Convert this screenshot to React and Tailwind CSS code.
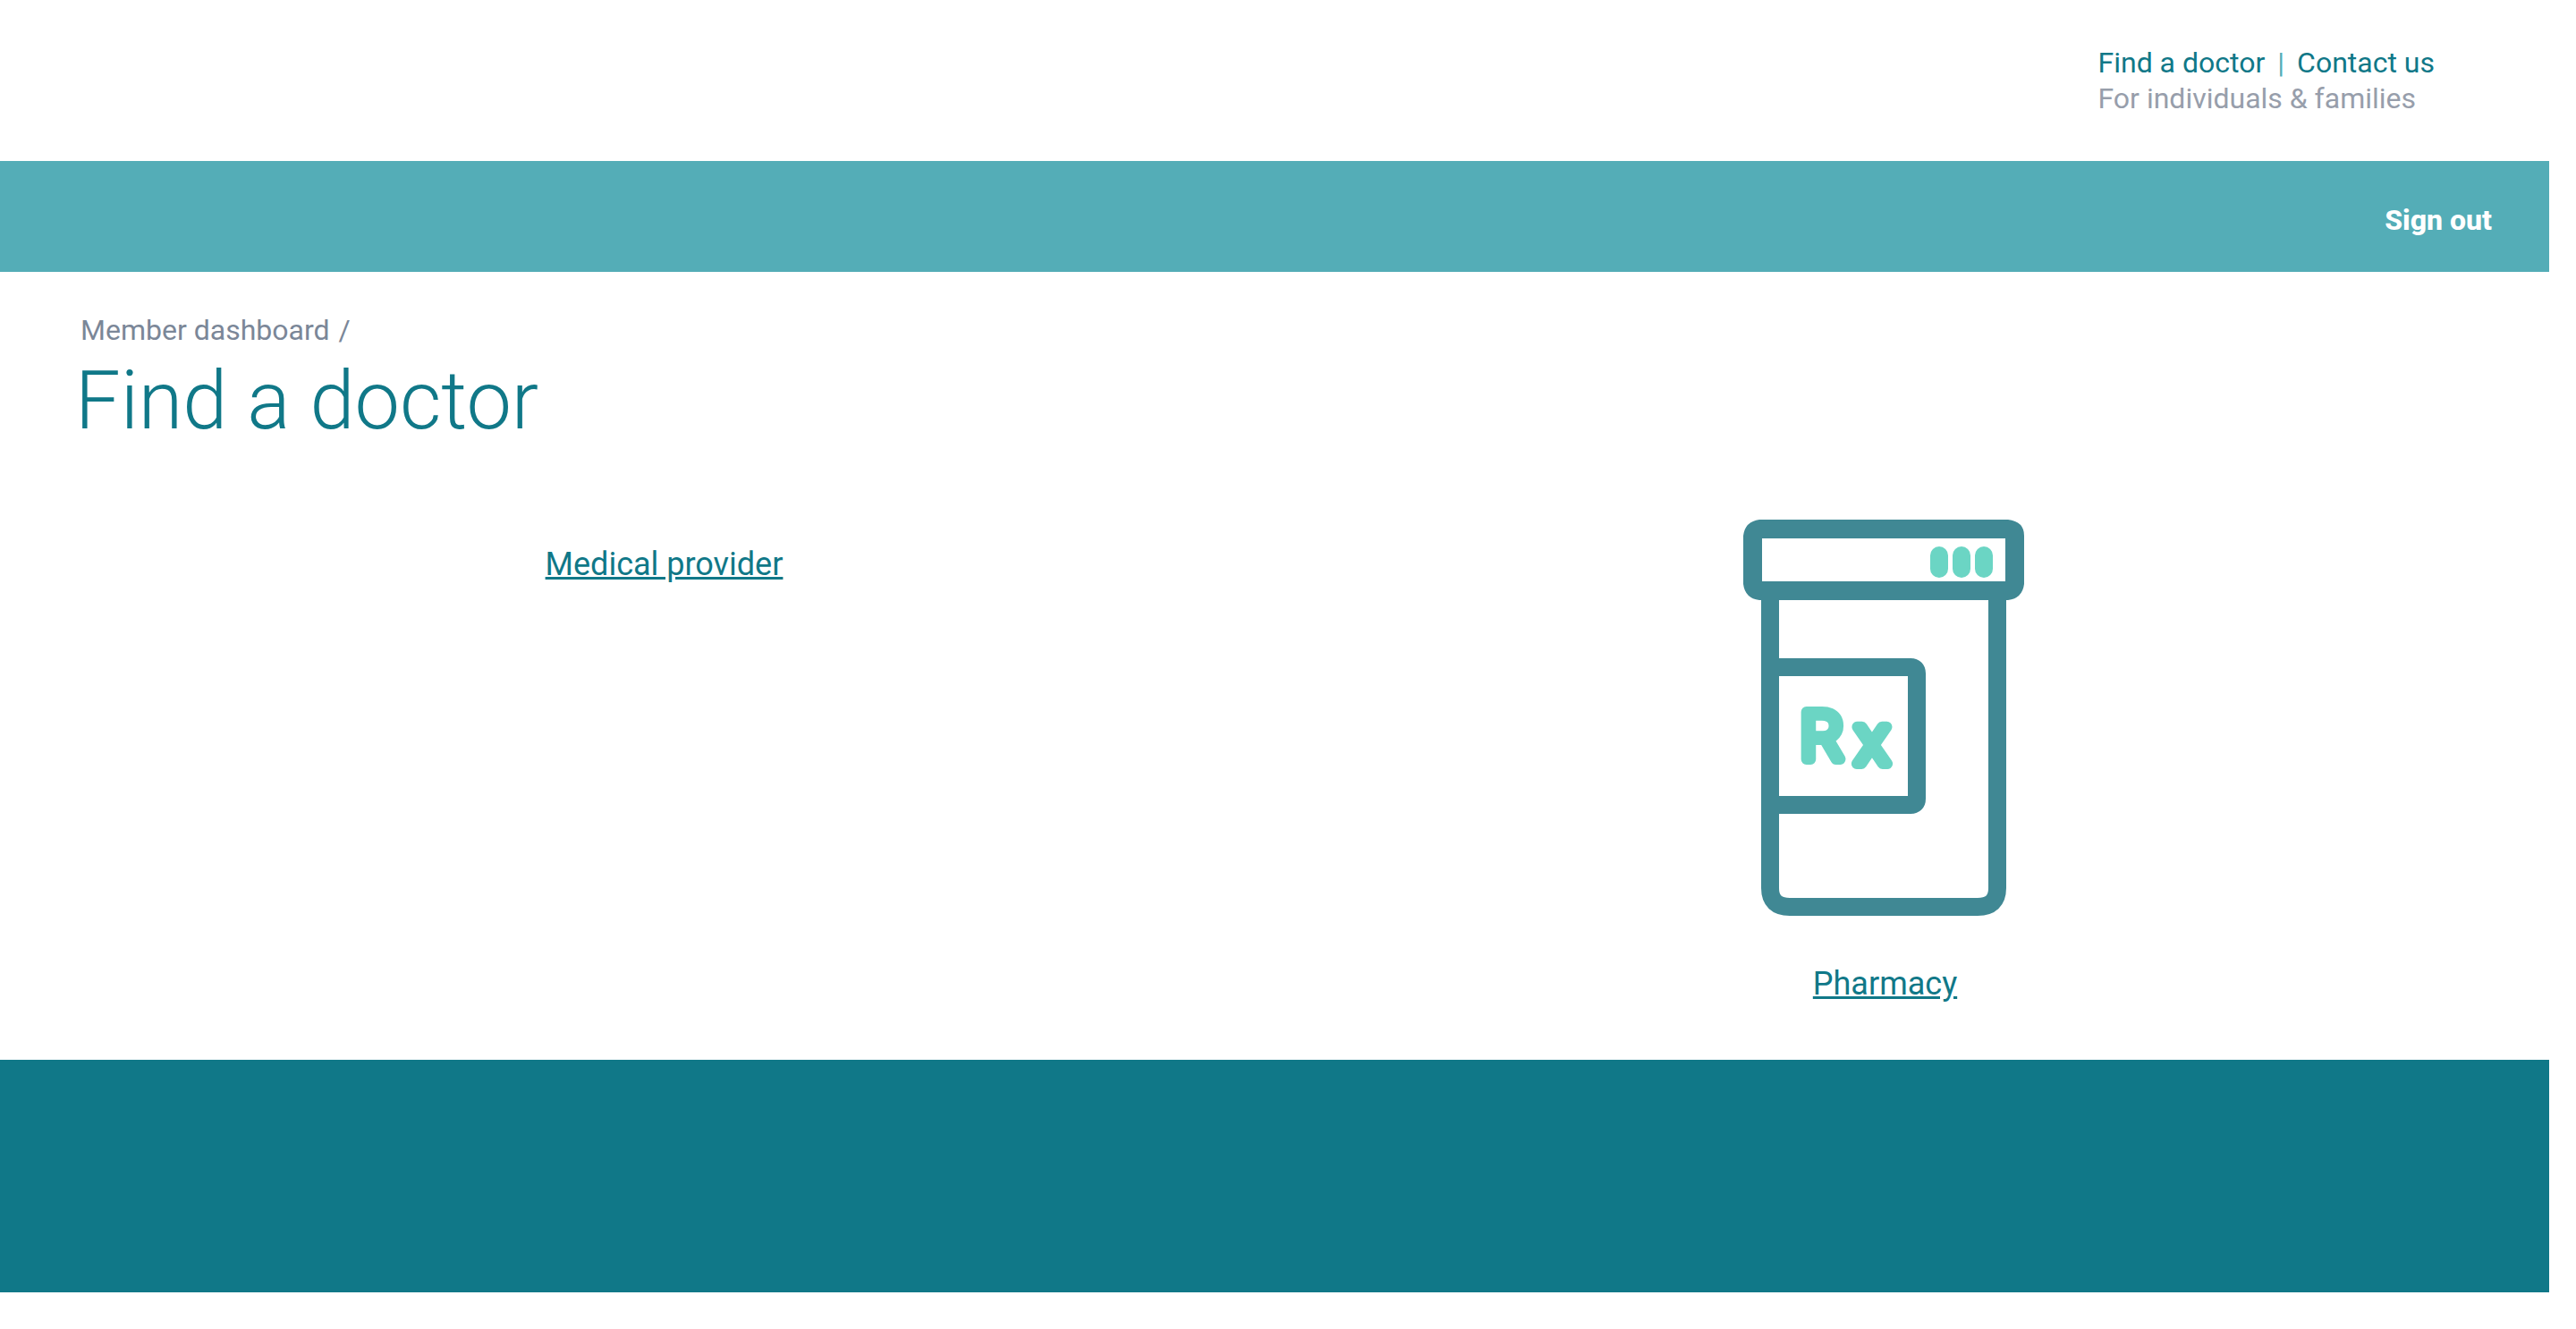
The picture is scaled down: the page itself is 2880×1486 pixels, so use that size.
function PillBottle() {
  return (
    <svg viewBox="0 0 314 443" className="w-[314px] h-[443px]" role="img" aria-label="Pharmacy bottle">
      <g fill="none" stroke="#408894" strokeWidth="20">
        <path d="M30 85V412Q30 433 52 433H262Q284 433 284 412V85" />
        <path d="M30 165H187Q194 165 194 172V312Q194 319 187 319H30" />
      </g>
      <path
        fill="#408894"
        fillRule="evenodd"
        d="M18 0H296Q314 2 314 18V72Q312 88 296 90H18Q2 88 0 72V18Q2 2 18 0ZM21 21V69H293V21Z"
      />
      <g fill="#6bd5c4">
        <rect x="209" y="30" width="20" height="35" rx="10" />
        <rect x="234" y="30" width="20" height="35" rx="10" />
        <rect x="259" y="30" width="20" height="35" rx="10" />
      </g>
      <g
        fill="#6bd5c4"
        stroke="#6bd5c4"
        strokeWidth="12"
        strokeLinejoin="round"
        fontFamily="Roboto, sans-serif"
        fontWeight="300"
      >
        <text x="64" y="268" fontSize="75">R</text>
        <text x="125" y="273" fontSize="78">x</text>
      </g>
    </svg>
  );
}

const tileLink = "text-4xl leading-[44px] text-[#107888] underline";

export default function App() {
  return (
    <div className="bg-white pr-[30px] font-['Roboto',sans-serif] text-[32px] leading-10">
      <header>
        <div className="flex h-[180px] justify-end pt-[50px] pr-32">
          <div>
            <nav className="flex gap-[14px] text-[#107888]">
              <a href="#find">Find a doctor</a>
              <span className="text-[#54adb7]">|</span>
              <a href="#contact">Contact us</a>
            </nav>
            <p className="text-[#979eab]">For individuals &amp; families</p>
          </div>
        </div>
        <div className="flex h-[124px] items-center justify-end bg-[#54adb7] pt-2 pr-16">
          <button type="button" className="font-extrabold text-white">Sign out</button>
        </div>
      </header>

      <main className="h-[881px] px-[60px] pt-[45px]">
        <nav aria-label="Breadcrumb" className="flex gap-[10px] pl-[30px] text-[#7b8798]">
          <a href="#dashboard">Member dashboard</a>
          <span>/</span>
        </nav>
        <h1 className="pl-6 text-[90px] leading-[120px] font-light text-[#107888]">Find a doctor</h1>
        <div className="mt-[72px] grid grid-cols-2 justify-items-center">
          <div className="pt-7">
            <a href="#medical" className={tileLink}>Medical provider</a>
          </div>
          <div className="flex flex-col items-center gap-[54px]">
            <div className="pr-1">
              <PillBottle />
            </div>
            <a href="#pharmacy" className={tileLink}>Pharmacy</a>
          </div>
        </div>
      </main>

      <footer className="h-[260px] bg-[#107888]" />
    </div>
  );
}
